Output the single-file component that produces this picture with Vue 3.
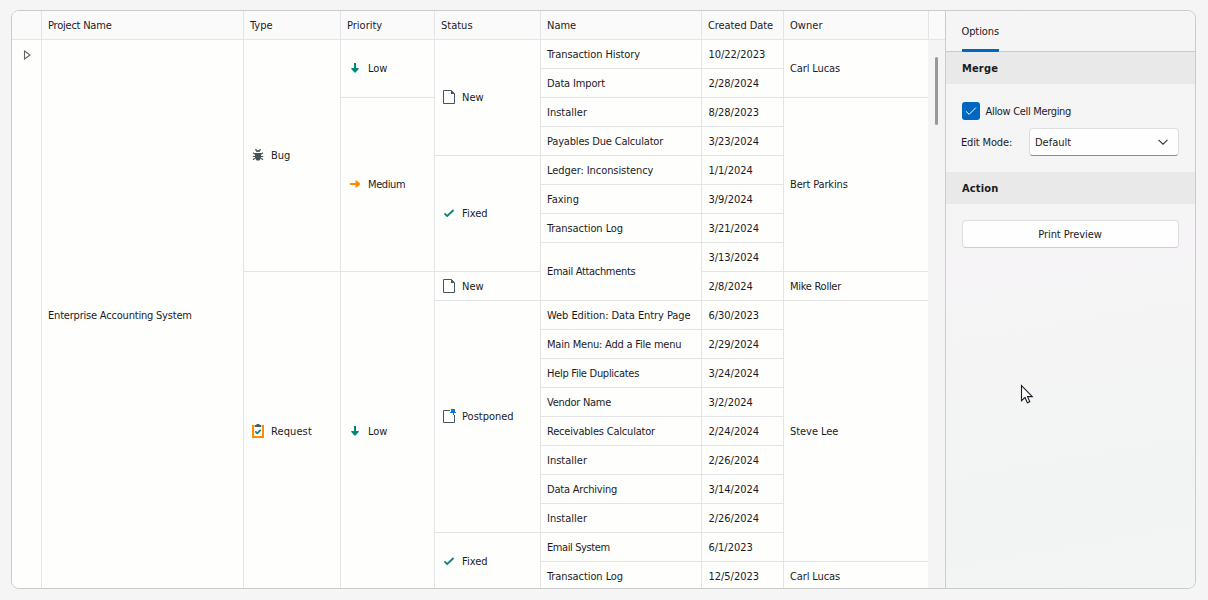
<template>
  <div class="window">
    <div class="grid-view">
      <div class="header">
        <div class="head-cell"></div>
        <div v-for="col in columns" :key="col.title" class="head-cell">
          <span class="label" :style="track(col.title)">{{ col.title }}</span>
        </div>
        <div class="head-cell filler"></div>
      </div>

      <div class="body">
        <div class="indicator">
          <svg width="8" height="10" viewBox="0 0 8 10">
            <path d="M1.5 1V9L7 5Z" fill="none" stroke="#606468" stroke-width="1.1" />
          </svg>
        </div>

        <div v-for="col in columns" :key="col.key" :class="['column', 'col-' + col.key]">
          <div
            v-for="(cell, i) in col.cells"
            :key="i"
            class="cell"
            :style="{ gridRow: 'span ' + (cell.span || 1) }"
          >
            <svg v-if="cell.icon" class="icon" width="16" height="16" viewBox="0 0 16 16">
              <g v-if="cell.icon === 'bug'">
                <path d="M5 2h1.3l.7 1h2l.7-1H11v1l-1 1v1H6V4L5 3z" fill="#5d7468" />
                <path d="M5 6h6v5l-1.5 2.5h-3L5 11z" fill="#46535c" />
                <path
                  d="M3 5.8 5 7.3M13 5.8 11 7.3M2.8 9.5h10.4M3 12.8 5 11.3M13 12.8 11 11.3"
                  stroke="#46535c"
                  stroke-width="1.2"
                />
              </g>
              <g v-else-if="cell.icon === 'request'">
                <path d="M4.5 3H3v11h10V3h-1.5" fill="none" stroke="#ff8c00" stroke-width="2" />
                <path d="M5 4V2h1.5V1h3v1H11v2z" fill="#4b5b64" />
                <path d="M5.3 8.3 7.3 10.3 10.7 6.8" fill="none" stroke="#0b8577" stroke-width="1.8" />
              </g>
              <path
                v-else-if="cell.icon === 'low'"
                d="M7 3h2v5h2.7v1L8.6 12.6H7.4L4.3 9V8H7z"
                fill="#00877a"
              />
              <path
                v-else-if="cell.icon === 'medium'"
                d="M3 7h5.5V4.3h.8L13.2 7.4v1.2L9.3 11.7h-.8V9H3z"
                fill="#ff8c00"
              />
              <g v-else-if="cell.icon === 'new'">
                <path d="M2.5 1.5h7.7l3.3 3.3v9.7h-11z" fill="none" stroke="#455660" />
                <path d="M10 1v4h4z" fill="#455660" />
              </g>
              <path
                v-else-if="cell.icon === 'fixed'"
                d="M3.4 8.4 6.2 11 12.6 5"
                fill="none"
                stroke="#0b8577"
                stroke-width="1.8"
              />
              <g v-else-if="cell.icon === 'postponed'">
                <path d="M9 2.5H2.5v12h11V7" fill="none" stroke="#455660" />
                <path d="M10 1h4v3h1v1h-2v2h-1V5H9V4h1z" fill="#1177d7" />
              </g>
            </svg>
            <span class="label" :style="track(cell.text)">{{ cell.text }}</span>
          </div>
        </div>

        <div class="scrollbar">
          <div class="thumb"></div>
        </div>
      </div>
    </div>

    <aside class="panel">
      <div class="tabs">
        <div class="tab"><span class="label" :style="track('Options')">Options</span></div>
      </div>
      <div class="section-title">Merge</div>
      <div class="merge">
        <label class="check-row">
          <span class="checkbox">
            <svg width="18" height="18" viewBox="0 0 18 18">
              <path d="M4 9.4 7.2 12.4 13.9 5.6" fill="none" stroke="#fff" stroke-width="1" />
            </svg>
          </span>
          <span class="label check-label" :style="track('Allow Cell Merging')">Allow Cell Merging</span>
        </label>
        <div class="mode-row">
          <span class="label mode-label" :style="track('Edit Mode:')">Edit Mode:</span>
          <div class="select">
            <span class="label">Default</span>
            <svg width="12" height="8" viewBox="0 0 12 8">
              <path d="M1.5 1.8 6 6.2 10.5 1.8" fill="none" stroke="#333" stroke-width="1.1" />
            </svg>
          </div>
        </div>
      </div>
      <div class="section-title">Action</div>
      <div class="action">
        <button type="button" class="btn">
          <span class="label" :style="track('Print Preview')">Print Preview</span>
        </button>
      </div>
    </aside>

    <svg class="pointer" width="14" height="21" viewBox="0 0 14 21">
      <path
        d="M1.5 1.5v15.2l3.5-3.2 2.4 5.3 2.4-1-2.3-5.2h4.8z"
        fill="#fff"
        stroke="#1c1c28"
        stroke-width="1.1"
      />
    </svg>
  </div>
</template>

<script setup>
// letter spacing per text, in px
const spacing = {
  'Project Name': -0.22,
  'Created Date': -0.08,
  'Owner': 0.05,
  'Enterprise Accounting System': -0.2,
  'Request': 0.1,
  'Medium': -0.4,
  'Transaction History': -0.1,
  'Data Import': -0.15,
  'Payables Due Calculator': -0.18,
  'Ledger: Inconsistency': -0.08,
  'Transaction Log': -0.08,
  'Email Attachments': -0.32,
  'Web Edition: Data Entry Page': -0.07,
  'Main Menu: Add a File menu': -0.21,
  'Help File Duplicates': -0.28,
  'Vendor Name': -0.27,
  'Receivables Calculator': -0.2,
  'Data Archiving': -0.2,
  'Email System': -0.4,
  'Carl Lucas': -0.12,
  'Bert Parkins': -0.15,
  'Mike Roller': -0.27,
  'Steve Lee': -0.05,
  'Options': -0.1,
  'Allow Cell Merging': -0.32,
  'Edit Mode:': -0.15,
  'Print Preview': -0.07,
}

const track = (text) => (spacing[text] ? { letterSpacing: spacing[text] + 'px' } : null)

const list = (items) => items.map((text) => ({ text }))

const columns = [
  {
    key: 'project',
    title: 'Project Name',
    cells: [{ text: 'Enterprise Accounting System', span: 19 }],
  },
  {
    key: 'type',
    title: 'Type',
    cells: [
      { text: 'Bug', icon: 'bug', span: 8 },
      { text: 'Request', icon: 'request', span: 11 },
    ],
  },
  {
    key: 'priority',
    title: 'Priority',
    cells: [
      { text: 'Low', icon: 'low', span: 2 },
      { text: 'Medium', icon: 'medium', span: 6 },
      { text: 'Low', icon: 'low', span: 11 },
    ],
  },
  {
    key: 'status',
    title: 'Status',
    cells: [
      { text: 'New', icon: 'new', span: 4 },
      { text: 'Fixed', icon: 'fixed', span: 4 },
      { text: 'New', icon: 'new' },
      { text: 'Postponed', icon: 'postponed', span: 8 },
      { text: 'Fixed', icon: 'fixed', span: 2 },
    ],
  },
  {
    key: 'name',
    title: 'Name',
    cells: [
      ...list([
        'Transaction History', 'Data Import', 'Installer', 'Payables Due Calculator',
        'Ledger: Inconsistency', 'Faxing', 'Transaction Log',
      ]),
      { text: 'Email Attachments', span: 2 },
      ...list([
        'Web Edition: Data Entry Page', 'Main Menu: Add a File menu', 'Help File Duplicates',
        'Vendor Name', 'Receivables Calculator', 'Installer', 'Data Archiving', 'Installer',
        'Email System', 'Transaction Log',
      ]),
    ],
  },
  {
    key: 'date',
    title: 'Created Date',
    cells: list([
      '10/22/2023', '2/28/2024', '8/28/2023', '3/23/2024', '1/1/2024', '3/9/2024', '3/21/2024',
      '3/13/2024', '2/8/2024', '6/30/2023', '2/29/2024', '3/24/2024', '3/2/2024', '2/24/2024',
      '2/26/2024', '3/14/2024', '2/26/2024', '6/1/2023', '12/5/2023',
    ]),
  },
  {
    key: 'owner',
    title: 'Owner',
    cells: [
      { text: 'Carl Lucas', span: 2 },
      { text: 'Bert Parkins', span: 6 },
      { text: 'Mike Roller' },
      { text: 'Steve Lee', span: 9 },
      { text: 'Carl Lucas' },
    ],
  },
]
</script>

<style>
body {
  background: #f5f5f5;
}
</style>

<style scoped>
.window {
  position: relative;
  box-sizing: border-box;
  display: flex;
  width: 1185px;
  height: 579px;
  margin: 10px 0 0 11px;
  border: 1px solid #cbcbcb;
  border-radius: 8px;
  overflow: hidden;
  color: #1b1b1f;
  font: 11px/14px Tahoma, "DejaVu Sans Condensed", "DejaVu Sans", sans-serif;
  font-stretch: condensed;
}

.label {
  display: block;
  margin-top: 1px;
  white-space: nowrap;
}

.grid-view {
  width: 933px;
  display: flex;
  flex-direction: column;
  background: #fefefd;
}

.header,
.body {
  display: grid;
}

.header {
  grid-template-columns: 30px 202px 97px 94px 106px 161px 82px 145px 16px;
  height: 28px;
  flex: none;
  border-bottom: 1px solid #e4e4e6;
  background: #fafafb;
}

.head-cell {
  display: flex;
  align-items: center;
  padding-left: 6px;
  border-right: 1px solid #e4e4e6;
}

.head-cell.filler {
  border-right: none;
}

.body {
  grid-template-columns: 30px 202px 97px 94px 106px 161px 82px 144px 17px;
  flex: 1;
  min-height: 0;
}

.indicator {
  padding: 10px 0 0 11px;
  border-right: 1px solid #e4e4e6;
}

.indicator svg {
  display: block;
}

.column {
  display: grid;
  grid-template-rows: repeat(19, 29px);
  border-right: 1px solid #e4e4e6;
}

.col-owner {
  border-right: none;
}

.cell {
  display: flex;
  align-items: center;
  padding-left: 6px;
  border-bottom: 1px solid #e4e4e6;
}

.col-date .cell {
  padding-left: 6.6px;
  letter-spacing: -0.05px;
}

.icon {
  flex: none;
  margin: 0 5px 1px 0;
}

.scrollbar {
  padding: 17px 0 0 7px;
  background: #f4f4f4;
}

.thumb {
  width: 3px;
  height: 68px;
  border-radius: 2px;
  background: #999;
}

.panel {
  flex: 1;
  border-left: 1px solid #cbcbcb;
  background: linear-gradient(170deg, #f5f5f5 0%, #f6f4f6 45%, #f2f4f4 80%, #f3f4f4 100%);
}

.tabs {
  box-sizing: border-box;
  height: 41px;
  padding-left: 16px;
  display: flex;
  border-bottom: 1px solid #cbcbcb;
}

.tab {
  box-sizing: border-box;
  width: 37px;
  height: 41px;
  padding-top: 13px;
  border-bottom: 3px solid #0067c0;
  border-radius: 1px;
}

.tab .label {
  margin-left: -0.5px;
}

.section-title {
  height: 32px;
  padding-left: 16px;
  line-height: 33px;
  font-weight: bold;
  letter-spacing: 0.15px;
  background: #e9e9e9;
}

.merge {
  box-sizing: border-box;
  height: 88px;
  padding: 18px 16px 0;
}

.check-row {
  display: flex;
  align-items: center;
}

.checkbox {
  width: 18px;
  height: 18px;
  border-radius: 3px;
  background: #0067c0;
}

.checkbox svg {
  display: block;
}

.check-label {
  margin-left: 5.5px;
}

.mode-row {
  display: flex;
  align-items: center;
  margin-top: 8px;
}

.mode-label {
  width: 68px;
  margin-left: -1px;
}

.select {
  box-sizing: border-box;
  display: flex;
  align-items: center;
  justify-content: space-between;
  width: 150px;
  height: 28px;
  padding: 0 9px 0 5px;
  border: 1px solid #dedede;
  border-bottom-color: #8c8c8c;
  border-radius: 4px;
  background: #fefefe;
}

.action {
  padding: 16px 16px 0;
}

.btn {
  display: block;
  box-sizing: border-box;
  width: 217px;
  height: 28px;
  padding: 0 1px 0 0;
  border: 1px solid #dedede;
  border-bottom-color: #cecece;
  border-radius: 4px;
  background: #fefefe;
  color: inherit;
  font: inherit;
}

.pointer {
  position: absolute;
  left: 1008px;
  top: 373px;
}
</style>
